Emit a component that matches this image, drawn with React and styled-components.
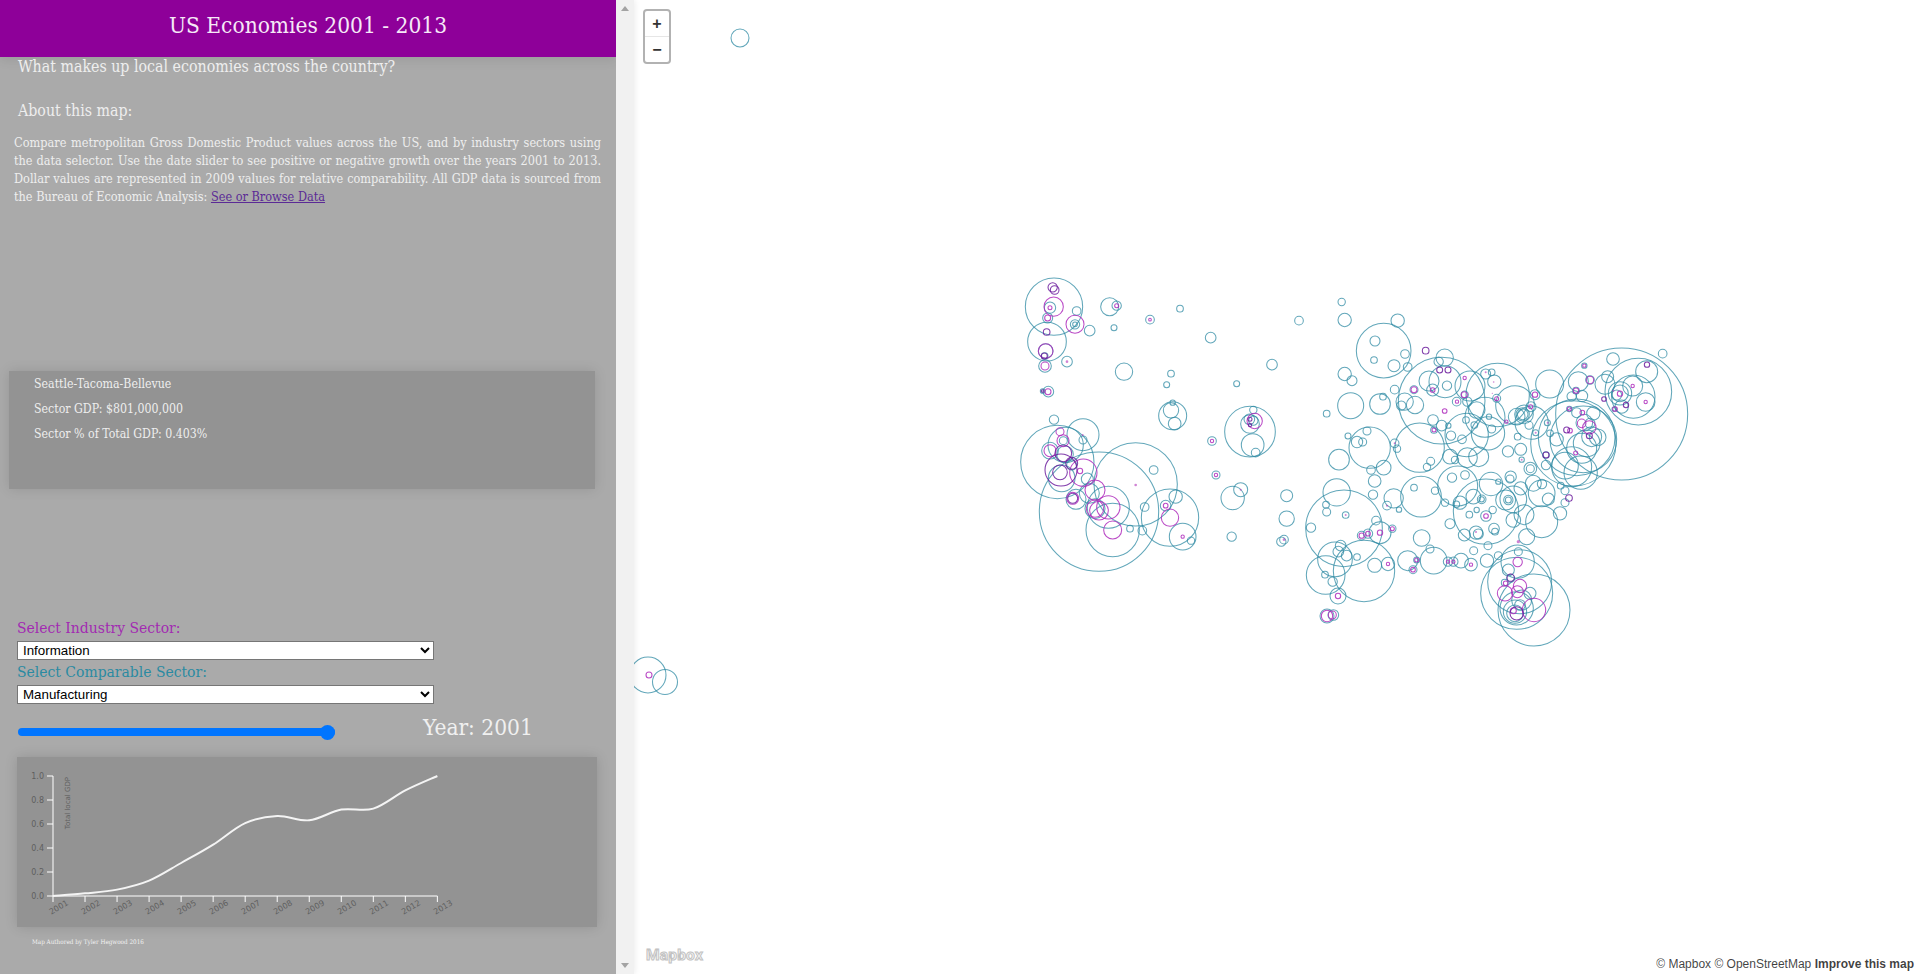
import React from 'react';
import styled, { createGlobalStyle } from 'styled-components';

const SERIF = `"DejaVu Serif Condensed", "DejaVu Serif", "Liberation Serif", serif`;

const GlobalStyle = createGlobalStyle`
  html, body {
    margin: 0;
    padding: 0;
    height: 100%;
    overflow: hidden;
    background: #fff;
  }
  #root { height: 100%; }
`;

// circles read off the reference, [x, y, r] in 3x crop coordinates
const WEST_TEAL = [[162,110,86],[141,215,58],[230,123,13],[269,182,16],[143,144,15],[150,113,17],[225,163,14],[225,163,7],[137,243,22],[134,258,10],[135,288,19],[201,275,16],[329,110,27],[350,107,14],[342,173,9],[450,149,13],[540,116,10],[372,305,26],[513,311,10],[500,344,9],[632,203,16],[710,341,9],[816,284,16],[897,152,13],[145,365,16],[128,363,7],[162,449,14],[172,576,110],[197,525,53],[249,494,48],[150,542,25],[249,510,12],[297,725,179],[407,643,125],[338,780,80],[325,712,63],[510,743,86],[527,680,20],[548,800,40],[573,812,11],[461,600,13],[434,711,13],[390,776,10],[427,782,13],[497,707,16],[268,670,30],[228,688,30],[285,716,30],[262,627,18],[185,625,40],[195,553,25],[215,585,15],[190,512,12],[518,437,42],[513,421,23],[524,461,19],[518,398,8],[636,513,13],[648,615,12],[698,684,35],[722,659,21],[750,485,76],[758,525,34],[767,548,13],[750,462,28],[748,448,16],[760,420,11],[760,452,14],[860,677,18],[860,746,23],[695,800,14],[844,815,14],[852,809,13]];
const WEST_PINK = [[161,110,29],[150,113,6],[143,144,9],[225,163,27],[137,243,22],[135,288,12],[350,107,6],[450,149,4],[144,365,9],[180,485,12],[189,512,18],[150,542,18],[250,608,41],[240,603,8],[218,685,18],[285,716,26],[297,722,28],[325,712,35],[285,660,30],[338,780,27],[497,707,7],[510,743,26],[548,800,5],[636,513,5],[648,615,5],[764,453,23]];
const WEST_DARK = [[158,52,14],[164,60,13],[140,186,10],[133,258,9],[128,363,4],[180,607,22],[183,600,48],[190,550,25],[215,580,18],[218,685,15],[750,448,6],[750,465,5]];
const WEST_DOT = [[201,275,4],[248,495,3],[407,645,4],[722,659,3],[852,809,4]];

const EAST_TEAL = [[125,66,11],[134,120,20],[293,122,20],[251,212,82],[225,183,15],[222,240,10],[282,257,18],[315,222,13],[323,261,13],[134,282,20],[156,302,15],[152,377,39],[240,372,31],[249,350,10],[80,401,10],[144,468,9],[209,503,62],[171,486,17],[188,486,12],[201,453,12],[117,539,31],[213,570,13],[251,563,22],[224,603,19],[110,637,41],[219,644,14],[132,745,115],[78,674,10],[80,696,12],[33,743,14],[137,705,10],[228,722,13],[240,758,33],[277,746,11],[185,767,13],[204,761,14],[122,797,16],[105,838,52],[77,885,58],[192,873,92],[115,815,16],[140,827,16],[171,831,10],[75,884,10],[98,905,14],[224,856,21],[264,852,20],[114,948,24],[81,1008,21],[100,1005,16],[281,655,29],[261,677,13],[297,689,8],[363,650,61],[342,623,10],[405,632,11],[435,668,11],[365,774,25],[390,807,12],[323,842,30],[350,840,9],[339,869,12],[401,842,40],[444,845,14],[460,845,14],[483,842,22],[513,854,19],[521,812,12],[564,797,12],[561,842,20],[595,827,12],[450,731,15],[425,362,130],[434,233,26],[416,245,14],[387,303,30],[441,317,14],[435,305,48],[398,330,18],[342,329,12],[314,365,26],[345,375,26],[304,377,14],[284,329,13],[359,503,74],[284,490,13],[291,506,11],[392,544,12],[381,561,11],[399,420,16],[425,437,16],[402,450,10],[453,467,14],[445,437,8],[486,478,13],[500,465,65],[510,318,45],[470,365,13],[494,344,11],[502,365,14],[450,530,22],[465,540,11],[502,533,30],[536,530,30],[593,345,95],[557,282,15],[575,277,10],[583,305,20],[530,390,25],[498,420,10],[523,435,10],[555,412,60],[567,410,8],[564,460,50],[575,447,12],[590,355,12],[645,375,58],[653,470,10],[624,514,17],[662,508,18],[665,539,8],[691,566,19],[691,566,12],[456,593,14],[495,585,13],[473,618,60],[480,668,20],[469,673,10],[573,612,35],[595,605,8],[632,590,17],[630,597,12],[545,658,13],[545,658,8],[520,650,22],[558,695,98],[508,704,10],[530,690,8],[578,690,11],[558,708,16],[640,720,22],[640,658,40],[625,660,14],[625,660,9],[617,660,30],[662,625,20],[700,610,24],[726,612,14],[672,704,30],[725,725,48],[745,657,18],[725,640,40],[780,700,20],[782,617,10],[795,632,12],[795,668,12],[528,758,20],[535,762,15],[582,746,16],[585,755,10],[493,765,18],[680,770,24],[655,815,12],[653,845,50],[659,905,96],[650,940,108],[702,990,108],[625,870,18],[690,940,18],[665,960,30],[650,985,50],[645,995,35],[645,1000,25],[660,975,16],[614,908,10],[632,895,12],[705,344,15],[749,312,42],[693,380,15],[672,403,28],[668,403,20],[668,403,16],[695,428,50],[687,436,12],[650,410,25],[742,428,9],[707,458,9],[750,460,10],[820,490,128],[830,472,115],[850,478,100],[845,505,45],[815,560,60],[842,578,50],[795,557,40],[738,525,10],[738,555,14],[770,478,20],[860,490,40],[875,470,30],[893,472,25],[830,398,15],[853,428,25],[870,430,15],[880,400,20],[835,305,30],[846,348,17],[815,349,14],[853,257,8],[870,300,13],[828,332,10],[808,387,8],[965,402,198],[1015,335,100],[939,237,19],[1040,275,33],[1088,221,13],[923,290,18],[915,313,30],[960,340,35],[960,340,25],[950,345,15],[998,318,30],[1000,350,65],[1037,366,28],[943,387,7],[965,380,20]];
const EAST_PINK = [[342,329,9],[398,330,7],[494,294,5],[493,344,9],[471,365,5],[434,393,7],[402,450,6],[590,356,6],[619,425,5],[705,344,8],[692,380,6],[185,767,8],[204,761,7],[240,758,8],[277,746,6],[264,852,5],[350,840,6],[339,869,7],[114,948,8],[81,1008,17],[97,1005,12],[444,845,5],[460,845,5],[513,854,5],[558,708,7],[653,846,14],[617,910,7],[660,918,20],[652,935,18],[615,940,23],[702,990,35],[640,992,9],[810,452,7],[845,430,13],[868,442,20],[847,398,7],[827,519,6],[828,332,8],[808,387,6],[870,300,11],[853,257,5],[960,341,8],[945,387,7],[998,318,5],[1037,366,5]];
const EAST_DARK = [[377,212,10],[419,270,9],[444,270,9],[632,893,11],[650,1000,20],[807,654,10],[738,525,9],[800,450,9],[868,467,9],[912,357,7],[978,375,8],[1041,254,8]];
const EAST_DOT = [[557,277,3],[581,306,2.5],[577,340,2],[743,428,3],[707,458,3],[665,539,3],[284,490,3],[261,677,3],[137,705,3],[528,756,3],[655,785,5],[940,332,3]];

const MAP_LEFT = 634;
const fromWest = ([x, y, r]) => [1000 + x / 3 - MAP_LEFT, 270 + y / 3, r / 3];
const fromEast = ([x, y, r]) => [1300 + x / 3 - MAP_LEFT, 280 + y / 3, r / 3];

const TEAL = [...WEST_TEAL.map(fromWest), ...EAST_TEAL.map(fromEast), [106, 38, 9], [14, 675, 18], [31, 682, 12.5]];
const PINK = [...WEST_PINK.map(fromWest), ...EAST_PINK.map(fromEast), [15, 675, 3]];
const DARK = [...WEST_DARK.map(fromWest), ...EAST_DARK.map(fromEast)];
const DOTS = [...WEST_DOT.map(fromWest), ...EAST_DOT.map(fromEast)];

const YEARS = [2001, 2002, 2003, 2004, 2005, 2006, 2007, 2008, 2009, 2010, 2011, 2012, 2013];
const GROWTH = [0, 0.022, 0.053, 0.128, 0.275, 0.428, 0.608, 0.667, 0.631, 0.72, 0.728, 0.88, 1];

const CHART_X0 = 36;
const CHART_STEP = 32.03;
const CHART_Y0 = 139;
const CHART_H = 120;

function linePath(points) {
  let d = `M${points[0][0]},${points[0][1]}`;
  for (let i = 0; i < points.length - 1; i++) {
    const p0 = points[i - 1] || points[i];
    const p1 = points[i];
    const p2 = points[i + 1];
    const p3 = points[i + 2] || p2;
    const c1 = [p1[0] + (p2[0] - p0[0]) / 6, p1[1] + (p2[1] - p0[1]) / 6];
    const c2 = [p2[0] - (p3[0] - p1[0]) / 6, p2[1] - (p3[1] - p1[1]) / 6];
    d += ` C${c1[0]},${c1[1]} ${c2[0]},${c2[1]} ${p2[0]},${p2[1]}`;
  }
  return d;
}

function GrowthChart() {
  const points = GROWTH.map((v, i) => [CHART_X0 + i * CHART_STEP, CHART_Y0 - v * CHART_H]);
  return (
    <ChartSvg viewBox="0 0 580 170">
      <line x1={CHART_X0} y1={CHART_Y0 - CHART_H} x2={CHART_X0} y2={CHART_Y0} stroke="#fff" />
      <line x1={CHART_X0} y1={CHART_Y0} x2={CHART_X0 + 12 * CHART_STEP} y2={CHART_Y0} stroke="#fff" />
      {[0, 0.2, 0.4, 0.6, 0.8, 1].map((v) => {
        const y = CHART_Y0 - v * CHART_H;
        return (
          <g key={v}>
            <line x1={CHART_X0 - 6} y1={y} x2={CHART_X0} y2={y} stroke="#fff" />
            <AxisText x={CHART_X0 - 9} y={y + 3} textAnchor="end">{v.toFixed(1)}</AxisText>
          </g>
        );
      })}
      {YEARS.map((year, i) => {
        const x = CHART_X0 + i * CHART_STEP;
        return (
          <g key={year}>
            <line x1={x} y1={CHART_Y0} x2={x} y2={CHART_Y0 + 6} stroke="#fff" />
            <AxisText x={x + 5.5} y={CHART_Y0 + 14} textAnchor="middle" transform={`rotate(-30 ${x + 5.5} ${CHART_Y0 + 11})`}>{year}</AxisText>
          </g>
        );
      })}
      <AxisTitle x={-20} y={53} transform="rotate(-90)" textAnchor="end">Total local GDP</AxisTitle>
      <path d={linePath(points)} fill="none" stroke="#f4f4f4" strokeWidth="2" />
    </ChartSvg>
  );
}

function BubbleSet({ items, kind }) {
  return items.map(([x, y, r], i) => <Bubble key={i} cx={x} cy={y} r={r} $kind={kind} />);
}

export default function App() {
  return (
    <>
      <GlobalStyle />
      <Page>
        <Sidebar>
          <Panel>
            <Header>US Economies 2001 - 2013</Header>
            <Question>What makes up local economies across the country?</Question>
            <AboutTitle>About this map:</AboutTitle>
            <Intro>
              Compare metropolitan Gross Domestic Product values across the US, and by industry sectors using the data selector. Use the date slider to see positive or negative growth over the years 2001 to 2013. Dollar values are represented in 2009 values for relative comparability. All GDP data is sourced from the Bureau of Economic Analysis: <DataLink href="#">See or Browse Data</DataLink>
            </Intro>
            <InfoCard>
              <InfoLine>Seattle-Tacoma-Bellevue</InfoLine>
              <InfoLine>Sector GDP: $801,000,000</InfoLine>
              <InfoLine>Sector % of Total GDP: 0.403%</InfoLine>
            </InfoCard>
            <Controls>
              <SelectLabel $color="#a22bb2">Select Industry Sector:</SelectLabel>
              <SectorSelect defaultValue="Information">
                <option>Information</option>
                <option>Manufacturing</option>
              </SectorSelect>
              <SelectLabel $color="#2b8aa2">Select Comparable Sector:</SelectLabel>
              <SectorSelect defaultValue="Manufacturing">
                <option>Information</option>
                <option>Manufacturing</option>
              </SectorSelect>
            </Controls>
            <SliderRow>
              <YearSlider type="range" min="2001" max="2013" defaultValue="2013" />
              <YearText>Year: 2001</YearText>
            </SliderRow>
            <ChartCard>
              <GrowthChart />
            </ChartCard>
            <Credit>Map Authored by Tyler Hegwood 2016</Credit>
          </Panel>
          <ScrollTrack>
            <ScrollArrow $up />
            <ScrollArrow />
          </ScrollTrack>
        </Sidebar>
        <MapArea>
          <MapSvg viewBox="0 0 1285 974">
            <BubbleSet items={TEAL} kind="teal" />
            <BubbleSet items={PINK} kind="pink" />
            <BubbleSet items={DARK} kind="dark" />
            <BubbleSet items={DOTS} kind="dot" />
          </MapSvg>
          <ZoomControl>
            <ZoomButton>+</ZoomButton>
            <ZoomButton>−</ZoomButton>
          </ZoomControl>
          <MapboxLogo>Mapbox</MapboxLogo>
          <Attribution>
            © Mapbox © OpenStreetMap <strong>Improve this map</strong>
          </Attribution>
        </MapArea>
      </Page>
    </>
  );
}

const Page = styled.div`
  display: flex;
  width: 100%;
  height: 100vh;
  overflow: hidden;
`;

const Sidebar = styled.div`
  flex: 0 0 634px;
  display: flex;
  position: relative;
  z-index: 2;
  box-shadow: 1px 0 6px rgba(0, 0, 0, 0.08);
`;

const Panel = styled.div`
  flex: 0 0 616px;
  background: #aaaaaa;
  font-family: ${SERIF};
  color: #eeeeee;
`;

const ScrollTrack = styled.div`
  flex: 1;
  background: #f1f1f1;
  display: flex;
  flex-direction: column;
  justify-content: space-between;
  align-items: center;
  padding: 6px 0;
`;

const ScrollArrow = styled.div`
  width: 0;
  height: 0;
  border-left: 4px solid transparent;
  border-right: 4px solid transparent;
  border-bottom: ${(p) => (p.$up ? '5px solid #a3a3a3' : 'none')};
  border-top: ${(p) => (p.$up ? 'none' : '5px solid #a3a3a3')};
`;

const Header = styled.h1`
  margin: 0;
  height: 57px;
  box-sizing: border-box;
  padding-bottom: 7px;
  background: #8e0099;
  color: #f6e9f7;
  display: flex;
  align-items: center;
  justify-content: center;
  font-size: 22.5px;
  font-weight: 400;
  box-shadow: 0 4px 10px rgba(0, 0, 0, 0.08);
`;

const Question = styled.div`
  font-size: 15.8px;
  line-height: 20px;
  padding-left: 18px;
`;

const AboutTitle = styled.div`
  font-size: 15.8px;
  line-height: 20px;
  padding-left: 18px;
  margin-top: 24px;
`;

const Intro = styled.p`
  margin: 13px 15px 0 14px;
  font-size: 12.6px;
  line-height: 18px;
  text-align: justify;
`;

const DataLink = styled.a`
  color: #5b2a96;
  text-decoration: underline;
`;

const InfoCard = styled.div`
  margin: 165px 0 0 9px;
  width: 586px;
  height: 118px;
  box-sizing: border-box;
  padding: 1px 0 0 25px;
  background: #939393;
  box-shadow: 0 0 12px rgba(0, 0, 0, 0.12);
`;

const InfoLine = styled.div`
  font-size: 12.25px;
  line-height: 25px;
`;

const Controls = styled.div`
  margin: 127px 0 0 17px;
  display: flex;
  flex-direction: column;
  align-items: flex-start;
`;

const SelectLabel = styled.label`
  color: ${(p) => p.$color};
  font-size: 15.5px;
  line-height: 25px;
`;

const SectorSelect = styled.select`
  width: 417px;
  height: 19px;
  box-sizing: border-box;
  padding: 0 0 0 1px;
  background: #fff;
  color: #000;
  border: 1px solid #767676;
  font-family: "Liberation Sans", Arial, sans-serif;
  font-size: 13.33px;
`;

const SliderRow = styled.div`
  display: flex;
  align-items: center;
  margin: 2px 0 0 18px;
  height: 42px;
`;

const YearSlider = styled.input`
  appearance: none;
  -webkit-appearance: none;
  width: 317px;
  height: 8px;
  margin: 10px 0 0;
  border-radius: 4px;
  background: #0075ff;
  &::-webkit-slider-thumb {
    -webkit-appearance: none;
    width: 15px;
    height: 15px;
    border-radius: 50%;
    background: #0075ff;
  }
`;

const YearText = styled.div`
  margin-left: 88px;
  font-size: 22.5px;
  color: #f0f0f0;
`;

const ChartCard = styled.div`
  margin: 9px 0 0 17px;
  width: 580px;
  height: 170px;
  background: #939393;
  box-shadow: 0 0 12px rgba(0, 0, 0, 0.14);
`;

const ChartSvg = styled.svg`
  display: block;
  width: 580px;
  height: 170px;
`;

const AxisText = styled.text`
  font-family: "DejaVu Sans", sans-serif;
  font-size: 8px;
  fill: #5f5f5f;
`;

const AxisTitle = styled(AxisText)`
  font-size: 7px;
`;

const Credit = styled.div`
  margin: 11px 0 0 32px;
  font-size: 6.3px;
  line-height: 8px;
  color: #f2f2f2;
`;

const MapArea = styled.div`
  flex: 1;
  position: relative;
  background: #fff;
  overflow: hidden;
`;

const MapSvg = styled.svg`
  display: block;
  width: 1285px;
  height: 974px;
`;

const Bubble = styled.circle`
  fill: ${(p) => (p.$kind === 'dot' ? '#b030b8' : 'none')};
  fill-opacity: 0.6;
  stroke: ${(p) =>
    p.$kind === 'teal' ? '#2e8aa3' : p.$kind === 'pink' ? '#ae2cbc' : p.$kind === 'dark' ? '#6b1b9c' : 'none'};
  stroke-opacity: ${(p) => (p.$kind === 'teal' ? 0.75 : 0.85)};
  stroke-width: 1.05;
`;

const ZoomControl = styled.div`
  position: absolute;
  top: 9px;
  left: 9px;
  width: 24px;
  display: flex;
  flex-direction: column;
  background: #fff;
  border: 2px solid rgba(0, 0, 0, 0.3);
  border-radius: 4px;
`;

const ZoomButton = styled.div`
  height: 25px;
  display: flex;
  align-items: center;
  justify-content: center;
  font-family: "Liberation Sans", Arial, sans-serif;
  font-weight: 700;
  font-size: 16px;
  color: #333;
  & + & {
    border-top: 1px solid #e6e6e6;
  }
`;

const MapboxLogo = styled.div`
  position: absolute;
  left: 12px;
  bottom: 10px;
  font-family: Roboto, "Liberation Sans", sans-serif;
  font-weight: 700;
  font-size: 15.5px;
  letter-spacing: 0.2px;
  color: #f6f6f6;
  -webkit-text-stroke: 1px #c2c2c2;
`;

const Attribution = styled.div`
  position: absolute;
  right: 5px;
  bottom: 2px;
  font-family: "Liberation Sans", Arial, sans-serif;
  font-size: 12px;
  line-height: 15px;
  color: rgba(0, 0, 0, 0.75);
  strong {
    font-weight: 700;
  }
`;
